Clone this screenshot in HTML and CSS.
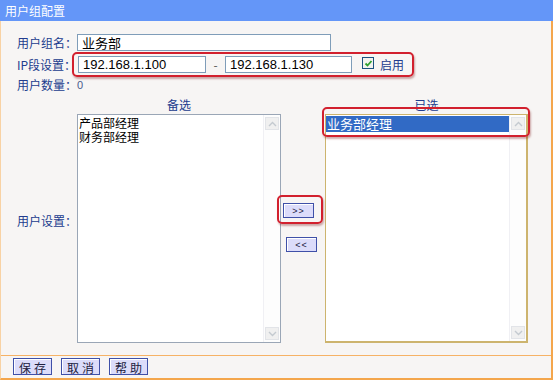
FILE: index.html
```html
<!DOCTYPE html>
<html lang="zh-CN">
<head>
  <meta charset="UTF-8">
  <title>用户组配置</title>
  <link rel="stylesheet" href="styles.css">
</head>
<body>
  <div class="panel">
    <div class="titlebar">用户组配置</div>

    <div class="panel-body">
      <div class="form-row">
        <span class="label">用户组名：</span>
        <input class="text-input wide" type="text" value="业务部">
      </div>

      <div class="form-row ip-row">
        <span class="label">IP段设置：</span>
        <input class="text-input ip ip-from" type="text" value="192.168.1.100">
        <span class="dash">-</span>
        <input class="text-input ip ip-to" type="text" value="192.168.1.130">
        <span class="checkbox">
          <svg width="9" height="9" viewBox="0 0 9 9"><polyline points="1.5,4.5 3.5,6.5 7.5,2" fill="none" stroke="#2ea02e" stroke-width="1.8"/></svg>
        </span>
        <span class="check-label">启用</span>
      </div>

      <div class="form-row count-row">
        <span class="label">用户数量：</span>
        <span class="count">0</span>
      </div>

      <div class="users">
        <span class="label">用户设置：</span>

        <div class="pick">
          <div class="pick-title">备选</div>
          <div class="listbox left">
            <div class="items">
              <div class="item">产品部经理</div>
              <div class="item">财务部经理</div>
            </div>
            <div class="scrollbar">
              <span class="arrow"><svg width="9" height="6" viewBox="0 0 9 6"><polyline points="1,5 4.5,1.5 8,5" fill="none" stroke="#c4cad0" stroke-width="1.4"/></svg></span>
              <span class="arrow"><svg width="9" height="6" viewBox="0 0 9 6"><polyline points="1,1 4.5,4.5 8,1" fill="none" stroke="#c4cad0" stroke-width="1.4"/></svg></span>
            </div>
          </div>
        </div>

        <div class="move">
          <button class="btn move-right">&gt;&gt;</button>
          <button class="btn move-left">&lt;&lt;</button>
        </div>

        <div class="pick">
          <div class="pick-title">已选</div>
          <div class="listbox right">
            <div class="items">
              <div class="item selected">业务部经理</div>
            </div>
            <div class="scrollbar">
              <span class="arrow"><svg width="9" height="6" viewBox="0 0 9 6"><polyline points="1,5 4.5,1.5 8,5" fill="none" stroke="#c4cad0" stroke-width="1.4"/></svg></span>
              <span class="arrow"><svg width="9" height="6" viewBox="0 0 9 6"><polyline points="1,1 4.5,4.5 8,1" fill="none" stroke="#c4cad0" stroke-width="1.4"/></svg></span>
            </div>
          </div>
        </div>
      </div>

      <div class="footer">
        <button class="btn action">保存</button>
        <button class="btn action">取消</button>
        <button class="btn action">帮助</button>
      </div>
    </div>

    <!-- red highlight marks drawn over the form -->
    <div class="mark mark-ip"></div>
    <div class="mark mark-selected"></div>
    <div class="mark mark-move"></div>
  </div>
</body>
</html>
```

FILE: styles.css
```css
body {
  margin: 0;
  font-family: "Noto Sans CJK SC", "Liberation Sans", sans-serif;
  font-size: 12px;
  background: #ffffff;
}

.panel {
  position: relative;
  width: 553px;
  height: 380px;
  display: flex;
  flex-direction: column;
  overflow: hidden;
}

.titlebar {
  height: 21px;
  line-height: 21px;
  padding-left: 5px;
  background: #6496f8;
  color: #ffffff;
  font-size: 12px;
}

.panel-body {
  flex: 1;
  display: flex;
  flex-direction: column;
  background: #f7f5f4;
  border-left: 1px solid #f8d2a4;
  border-right: 2px solid #f4a64c;
  border-bottom: 2px solid #f4a64c;
  padding-top: 13px;
}

.form-row {
  display: flex;
  align-items: center;
  height: 17px;
  margin-bottom: 5px;
  padding-left: 16px;
}

.ip-row {
  margin-bottom: 3px;
}

.count-row {
  margin-bottom: 5px;
}

.label {
  width: 60px;
  color: #223c8e;
  white-space: nowrap;
}

.text-input {
  box-sizing: border-box;
  height: 17px;
  padding: 0 4px;
  border: 1px solid #7f9db9;
  background: #ffffff;
  font-family: "Liberation Sans", "Noto Sans CJK SC", sans-serif;
  font-size: 13px;
  color: #000000;
  outline: none;
}

.wide {
  width: 254px;
  font-family: "Noto Sans CJK SC", sans-serif;
}

.ip-from {
  width: 128px;
  margin-left: 1px;
}

.ip-to {
  width: 127px;
}

.dash {
  width: 19px;
  text-align: center;
  color: #555;
}

.checkbox {
  display: inline-flex;
  align-items: center;
  justify-content: center;
  box-sizing: border-box;
  width: 12px;
  height: 12px;
  margin: -3px 0 0 10px;
  border: 1px solid #1c5180;
  background: #f2f2ee;
}

.check-label {
  margin-left: 6px;
  color: #223c8e;
}

.count {
  color: #4a5a8c;
  font-family: "Liberation Sans", sans-serif;
  font-size: 11px;
}

.users {
  display: flex;
  align-items: center;
  padding-left: 16px;
}

.pick {
  display: flex;
  flex-direction: column;
}

.pick-title {
  height: 16px;
  line-height: 14px;
  text-align: center;
  color: #223c8e;
}

.listbox {
  box-sizing: border-box;
  display: flex;
  height: 229px;
  background: #ffffff;
}

.listbox.left {
  width: 204px;
  border: 1px solid #9aa6b6;
}

.listbox.right {
  width: 203px;
  border: 2px solid #cdb46e;
  border-top-width: 1px;
  border-left-width: 1px;
}

.items {
  flex: 1;
  padding-top: 1px;
}

.item {
  height: 14px;
  line-height: 14px;
  padding-left: 1px;
  color: #000000;
}

.item.selected {
  height: 16px;
  line-height: 16px;
  background: #316ac5;
  color: #ffffff;
  font-size: 13px;
}

.scrollbar {
  width: 16px;
  display: flex;
  flex-direction: column;
  justify-content: space-between;
  align-items: center;
  padding: 2px 0;
  border-left: 1px solid #f0f0f4;
  background: #fdfdfd;
}

.arrow {
  box-sizing: border-box;
  width: 14px;
  height: 13px;
  display: flex;
  align-items: center;
  justify-content: center;
  background: #f0f0f0;
  border: 1px solid #e2e4e8;
}

.move {
  align-self: flex-start;
  width: 44px;
  display: flex;
  flex-direction: column;
  padding-top: 105px;
}

.btn {
  box-sizing: border-box;
  padding: 0;
  border: 1px solid #3f50a8;
  background: #dcdcfa;
  box-shadow: inset 1px 1px 0 #ffffff;
  color: #202040;
  font-family: "Noto Sans CJK SC", sans-serif;
  cursor: pointer;
}

.move .btn {
  width: 31px;
  height: 15px;
  font-family: "Liberation Sans", sans-serif;
  font-size: 9px;
  letter-spacing: 1px;
}

.move-right {
  margin-left: 2px;
}

.move-left {
  margin: 19px 0 0 5px;
}

.footer {
  display: flex;
  gap: 9px;
  margin-top: 12px;
  padding: 2px 0 0 12px;
  border-top: 1px solid #f6b266;
  flex: 1;
}

.action {
  width: 39px;
  height: 17px;
  font-size: 12px;
  letter-spacing: 3px;
  text-indent: 3px;
}

.mark {
  position: absolute;
  box-sizing: border-box;
  border: 2px solid #d2202e;
  border-radius: 5px;
  box-shadow: 1px 2px 2px rgba(120, 20, 20, 0.35);
}

.mark-ip {
  left: 72px;
  top: 52px;
  width: 342px;
  height: 25px;
}

.mark-selected {
  left: 322px;
  top: 107px;
  width: 208px;
  height: 30px;
}

.mark-move {
  left: 277px;
  top: 195px;
  width: 46px;
  height: 29px;
}
```
